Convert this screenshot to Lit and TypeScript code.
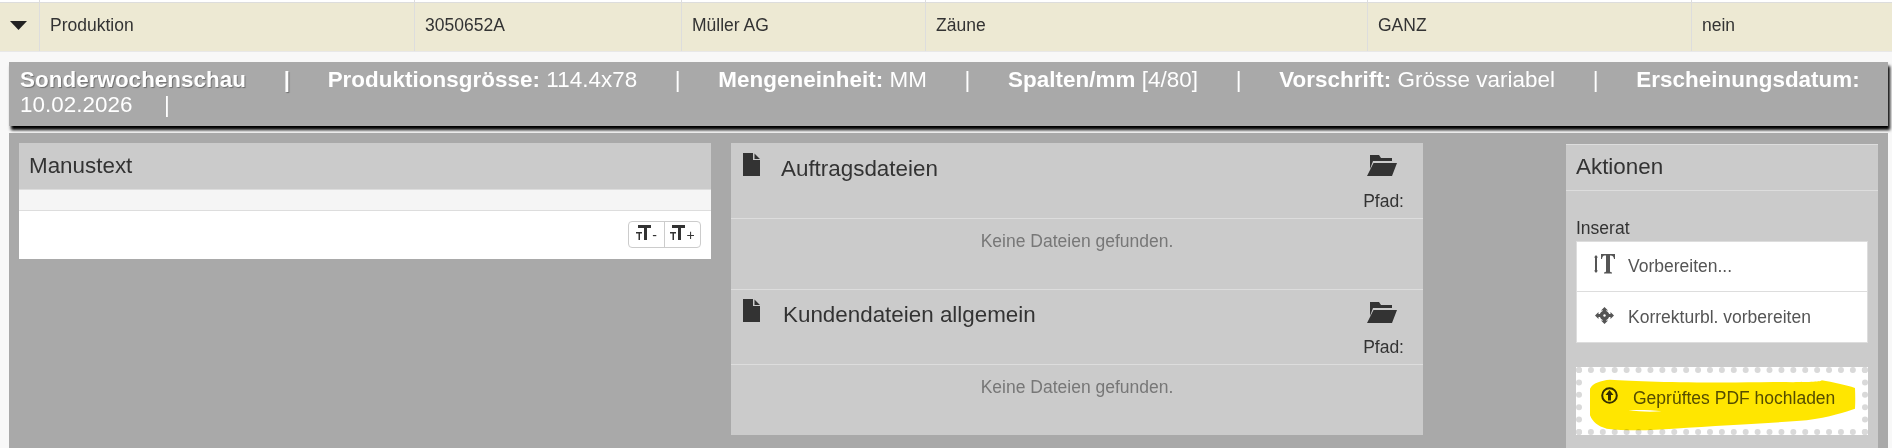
import { LitElement, css, html, svg } from 'lit'
import { customElement } from 'lit/decorators.js'

const SP = '\u00a0\u00a0\u00a0\u00a0\u00a0\u00a0'
const SP_LAST = '\u00a0\u00a0\u00a0\u00a0\u00a0'

const fileIcon = html`<svg class="file" viewBox="0 0 17 23"><path d="M0 0h10v7h7v16H0zM11.5 0.5 17 6h-5.5z" fill="#333" /></svg>`
const folderIcon = html`<svg class="folder" viewBox="0 0 30 21"><path d="M3 0h9l2 3h11v3H6L3 14zM6.5 8H30l-5 13H0z" fill="#333" /></svg>`

@customElement('app-root')
export class AppRoot extends LitElement {
  static styles = css`
    :host {
      display: block;
      height: 448px;
      overflow: hidden;
      background: #f8f8f8;
      font-family: 'Liberation Sans', Arial, sans-serif;
      font-size: 17.5px;
      color: #333;
    }

    .top-line {
      display: grid;
      grid-template-columns: 40px 375px 267px 244px 442px 324px 1fr;
      height: 2px;
      background: #fff;
      border-bottom: 1px solid #ddd;
    }

    .row {
      display: grid;
      grid-template-columns: 40px 375px 267px 244px 442px 324px 1fr;
      height: 48px;
      background: #ede9d3;
      border-bottom: 1px solid #e8e8e8;
    }

    .top-line span {
      border-right: 1px solid #ddd;
    }

    .cell {
      box-sizing: border-box;
      display: flex;
      align-items: center;
      padding: 0 0 4px 10px;
      border-right: 1px solid #ddd;
    }

    .cell:last-child,
    .top-line span:last-child {
      border-right: none;
    }

    .caret svg {
      width: 17px;
      height: 9px;
    }

    .bar {
      box-sizing: border-box;
      height: 64px;
      margin: 10px 4px 0 9px;
      padding: 5px 11px 0;
      background: #a9a9a9;
      color: #fff;
      font-size: 22.4px;
      line-height: 25px;
      letter-spacing: 0.05px;
      box-shadow: 2px 4px 3px #000;
    }

    .bar .main {
      text-shadow: 1px 1px 1px rgba(0, 0, 0, 0.35);
    }

    .content {
      box-sizing: border-box;
      display: flex;
      align-items: flex-start;
      height: 320px;
      margin: 7px 4px 0 9px;
      padding: 10px 10px 0;
      background: #a9a9a9;
    }

    .title {
      font-size: 22.4px;
      line-height: 25px;
    }

    .manus {
      width: 692px;
      background: #fff;
    }

    .manus-head {
      box-sizing: border-box;
      height: 47px;
      padding: 10px 10px 0;
      background: #cbcbcb;
      border-bottom: 1px solid #ddd;
    }

    .manus-strip {
      box-sizing: border-box;
      height: 21px;
      background: #f5f5f5;
      border-bottom: 1px solid #ddd;
    }

    .manus-body {
      display: flex;
      justify-content: flex-end;
      height: 48px;
      padding: 10px 10px 0 0;
      box-sizing: border-box;
    }

    .size-btns {
      display: flex;
      height: 27px;
      border: 1px solid #ccc;
      border-radius: 4px;
      box-sizing: border-box;
    }

    .size-btn {
      display: flex;
      align-items: center;
      justify-content: center;
      gap: 1px;
      width: 35px;
      font-size: 14px;
      line-height: 1;
    }

    .size-btn + .size-btn {
      border-left: 1px solid #ccc;
    }

    .size-btn svg {
      width: 15px;
      height: 15px;
      margin-top: -5px;
    }

    .files {
      width: 692px;
      margin-left: 20px;
      background: #cbcbcb;
    }

    .files-head {
      box-sizing: border-box;
      display: flex;
      justify-content: space-between;
      border-bottom: 1px solid #ddd;
      padding: 10px 19px 0 12px;
    }

    .files-head.first {
      height: 76px;
    }

    .files-head.second {
      height: 75px;
      padding-top: 9px;
    }

    .files-name {
      display: flex;
      align-items: flex-start;
    }

    .file {
      width: 17px;
      height: 23px;
    }

    .files-name .title {
      margin-left: 21px;
      margin-top: 3px;
    }

    .files-head.second .title {
      margin-left: 23px;
    }

    .path {
      display: flex;
      flex-direction: column;
      align-items: flex-end;
      line-height: 20px;
    }

    .folder {
      width: 30px;
      height: 21px;
      margin: 2px 7px 15px 0;
    }

    .files-head.second .folder {
      margin-top: 3px;
      margin-bottom: 14px;
    }

    .files-empty {
      box-sizing: border-box;
      height: 70px;
      padding-top: 12px;
      text-align: center;
      color: #777;
      line-height: 20px;
    }

    .files-empty.first {
      border-bottom: 1px solid #ddd;
      height: 71px;
    }

    .actions {
      width: 312px;
      height: 310px;
      margin-left: auto;
      margin-top: 1px;
      background: #cbcbcb;
      border-top: 1px solid #ddd;
    }

    .actions-head {
      box-sizing: border-box;
      height: 46px;
      padding: 9px 10px 0;
      border-bottom: 1px solid #ddd;
    }

    .actions-body {
      padding: 27px 10px 0;
    }

    .label {
      line-height: 20px;
      margin-bottom: 3px;
    }

    .list {
      background: #fff;
      border: 1px solid #ddd;
      color: #555;
    }

    .item {
      box-sizing: border-box;
      display: flex;
      align-items: center;
      height: 49px;
    }

    .item + .item {
      height: 51px;
      border-top: 1px solid #ddd;
    }

    .item svg {
      flex: none;
    }

    .i-text {
      width: 21px;
      height: 20px;
      margin: -6px 13px 0 17px;
    }

    .i-move {
      width: 19px;
      height: 17px;
      margin: -4px 14px 0 18px;
    }

    .upload {
      box-sizing: border-box;
      position: relative;
      display: flex;
      align-items: center;
      height: 68px;
      margin-top: 24px;
      background: #fff;
      border: 6px dotted #d9d9d9;
      color: #555;
    }

    .i-up {
      width: 17px;
      height: 17px;
      margin: 0 15px 11px 19px;
      flex: none;
    }

    .upload span {
      margin-bottom: 6px;
    }

    .marker {
      position: absolute;
      left: -6px;
      top: -6px;
      width: 292px;
      height: 68px;
      mix-blend-mode: multiply;
      pointer-events: none;
    }
  `

  render() {
    return html`
      <div class="top-line"><span></span><span></span><span></span><span></span><span></span><span></span><span></span></div>
      <div class="row">
        <div class="cell caret">
          <svg viewBox="0 0 17 9"><path d="M0 0h17L8.5 9z" fill="#222" /></svg>
        </div>
        <div class="cell">Produktion</div>
        <div class="cell">3050652A</div>
        <div class="cell">Müller AG</div>
        <div class="cell">Zäune</div>
        <div class="cell">GANZ</div>
        <div class="cell">nein</div>
      </div>

      <div class="bar"><b class="main">Sonderwochenschau${SP}|${SP}</b><b>Produktionsgrösse:</b> 114.4x78${SP}|${SP}<b>Mengeneinheit:</b> MM${SP}|${SP}<b>Spalten/mm</b> [4/80]${SP}|${SP}<b>Vorschrift:</b> Grösse variabel${SP}|${SP}<b>Erscheinungsdatum:</b> 10.02.2026${SP_LAST}|</div>

      <div class="content">
        <div class="manus">
          <div class="manus-head title">Manustext</div>
          <div class="manus-strip"></div>
          <div class="manus-body">
            <div class="size-btns">
              <div class="size-btn">${this._sizeIcon()}<span>-</span></div>
              <div class="size-btn">${this._sizeIcon()}<span>+</span></div>
            </div>
          </div>
        </div>

        <div class="files">
          <div class="files-head first">
            <div class="files-name">${fileIcon}<span class="title">Auftragsdateien</span></div>
            <div class="path">${folderIcon}<span>Pfad:</span></div>
          </div>
          <div class="files-empty first">Keine Dateien gefunden.</div>
          <div class="files-head second">
            <div class="files-name">${fileIcon}<span class="title">Kundendateien allgemein</span></div>
            <div class="path">${folderIcon}<span>Pfad:</span></div>
          </div>
          <div class="files-empty">Keine Dateien gefunden.</div>
        </div>

        <div class="actions">
          <div class="actions-head title">Aktionen</div>
          <div class="actions-body">
            <div class="label">Inserat</div>
            <div class="list">
              <div class="item">
                <svg class="i-text" viewBox="0 0 21 20">
                  <path d="M2 1 4 3.500H3v13h1L2 19 0 16.500h1v-13H0zM7 0h14v5h-1c-.3-2-1-3.500-3.500-3.500H16v15.500c0 1 .7 1.300 2 1.500v1h-8v-1c1.300-.2 2-.5 2-1.500V1.500h-1.500C9 1.500 8.300 3 8 5H7z" fill="#555" />
                </svg>
                <span>Vorbereiten...</span>
              </div>
              <div class="item">
                <svg class="i-move" viewBox="0 0 19 17">
                  <path d="M9.500 0 13 3.500h-2v1.500h-3V3.500H6zM9.500 17 6 13.500h2V12h3v1.500h2zM0 8.500 3.500 5v2H5v3H3.500v2zM19 8.500 15.500 12v-2H14V7h1.500V5z" fill="#555" />
                  <circle cx="9.500" cy="8.500" r="4.800" fill="#555" />
                  <circle cx="9.500" cy="8.500" r="1.200" fill="#fff" />
                </svg>
                <span>Korrekturbl. vorbereiten</span>
              </div>
            </div>
            <div class="upload">
              <svg class="i-up" viewBox="0 0 17 17">
                <circle cx="8.500" cy="8.500" r="7.300" fill="none" stroke="#333" stroke-width="2" />
                <path d="M8.500 3 12.500 8H10v5.500H7V8H4.500z" fill="#333" />
              </svg>
              <span>Geprüftes PDF hochladen</span>
              <svg class="marker" viewBox="0 0 876 204" preserveAspectRatio="none">
                <path
                  fill-rule="evenodd"
                  d="M42 65C50 48 75 40 102 38C190 44 390 49 592 45C660 46 737 46 737 40C770 46 810 54 837 63C838 85 838 110 837 125C810 135 760 150 692 160C590 168 440 175 292 185C230 190 150 192 92 185C65 178 50 165 42 145Z
                     M157 130C190 128 230 130 257 133C220 135 190 134 157 130Z"
                  fill="#ffe600"
                />
              </svg>
            </div>
          </div>
        </div>
      </div>
    `
  }

  private _sizeIcon() {
    return svg`<svg viewBox="0 0 15 15">
      <path d="M2 0h13v3h-4v12H8V3H2zM0 7h6v1.500H4V15H2.500V8.500H0z" fill="#333" />
    </svg>`
  }
}
